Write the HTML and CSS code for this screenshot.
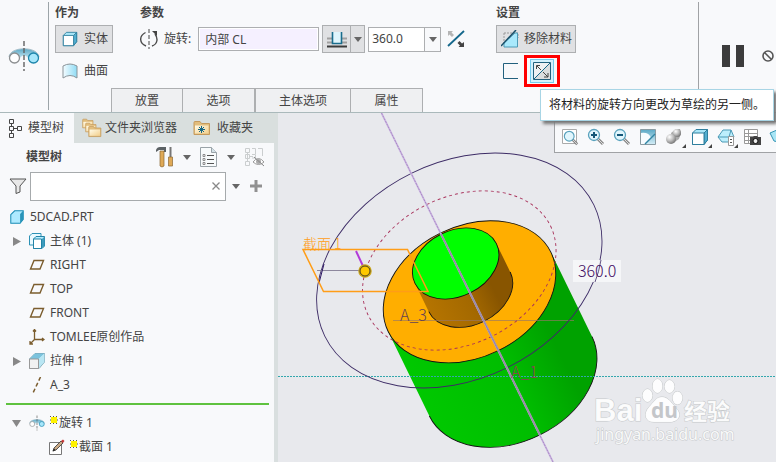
FILE: index.html
```html
<!DOCTYPE html>
<html lang="zh-CN">
<head>
<meta charset="utf-8">
<title>5DCAD.PRT</title>
<link rel="stylesheet" href="styles.css">
</head>
<body>
<svg class="defs" width="0" height="0" aria-hidden="true">
  <defs>
    <linearGradient id="ice" x1="0" y1="0" x2="1" y2="0"><stop offset="0" stop-color="#f4fcff"/><stop offset="1" stop-color="#8fdcf5"/></linearGradient>
    <linearGradient id="steel" x1="0" y1="0" x2="0" y2="1"><stop offset="0" stop-color="#5ba9c6"/><stop offset="1" stop-color="#d5eef7"/></linearGradient>
    <linearGradient id="gold" x1="0" y1="0" x2="1" y2="1"><stop offset="0" stop-color="#fffbe8"/><stop offset="1" stop-color="#f3cf8c"/></linearGradient>
    <linearGradient id="body" x1="0" y1="0" x2="1" y2="0"><stop offset="0" stop-color="#00c800"/><stop offset=".5" stop-color="#00bd00"/><stop offset=".8" stop-color="#00a200"/><stop offset="1" stop-color="#00a200"/></linearGradient>
    <linearGradient id="boss" x1="0" y1="0" x2="1" y2="0"><stop offset="0" stop-color="#b57400"/><stop offset=".45" stop-color="#a46900"/><stop offset=".75" stop-color="#885500"/><stop offset="1" stop-color="#885500"/></linearGradient>
    <radialGradient id="ball" cx=".35" cy=".3" r=".8"><stop offset="0" stop-color="#fff"/><stop offset=".5" stop-color="#bbb"/><stop offset="1" stop-color="#666"/></radialGradient>
    <symbol id="revolve" viewBox="0 0 32 32">
      <path d="M1 17C2 6 30 6 31 17L21 20C19 14 13 14 11 20Z" fill="url(#steel)"/>
      <path d="M1 17C2 6 30 6 31 17" fill="none" stroke="#a9c0ca"/>
      <circle cx="6.500" cy="18" r="5" fill="#fff" stroke="#8c8f91" stroke-width="1.300"/>
      <circle cx="25.500" cy="18" r="5" fill="#a7e7fb" stroke="#1b85ab" stroke-width="1.300"/>
      <path d="M16 1V31" stroke="#636363" stroke-width="1.400" stroke-dasharray="5 2"/>
    </symbol>
    <symbol id="folder" viewBox="0 0 18 16">
      <path d="M1 14.500V2.500Q1 1.500 2 1.500H7L8.500 3.500H16.500V14.500Z" fill="#e2bd7c" stroke="#c59a5c"/>
      <path d="M2 5.500H15.500V13.500H2Z" fill="url(#gold)"/>
    </symbol>
    <symbol id="plane" viewBox="0 0 16 12"><path d="M5 1.500H14.500L11 10H1.500Z" fill="none" stroke="#7b5d2e" stroke-width="1.400"/></symbol>
    <symbol id="spark" viewBox="0 0 8 8"><path d="M0 .5H1M3 .5H4M6 .5H7M0 7.500H1M3 7.500H4M6 7.500H7M0 4H1M7 4H8" stroke="#555"/><path d="M1 1H7V7H1Z" fill="#fff200"/></symbol>
    <symbol id="cube" viewBox="0 0 18 18">
      <path d="M1.500 5L5 1.500H16.500V12L13 16.500H1.500Z" fill="#a9e6f8" stroke="#2f7f9e"/>
      <path d="M13 5L16.500 1.500V12L13 16.500Z" fill="#52afd0" stroke="#2f7f9e"/>
      <path d="M1.500 5H13V16.500H1.500Z" fill="#fff" stroke="#2f7f9e"/>
    </symbol>
    <symbol id="lens" viewBox="0 0 18 18">
      <path d="M10 10L16 16" stroke="#888" stroke-width="3"/><path d="M11 11L16 16" stroke="#ddd"/>
      <circle cx="7" cy="7" r="5.500" fill="#e1f6fd" stroke="#5aa2bd" stroke-width="1.300"/>
    </symbol>
  </defs>
</svg>

<header class="ribbon">
  <div class="feature"><svg width="32" height="32"><use href="#revolve"/></svg></div>
  <div class="dashboard">
    <div class="groups">
      <section class="group as">
        <h2>作为</h2>
        <button class="tool pressed"><svg class="i16" viewBox="0 0 18 18"><use href="#cube"/></svg>实体</button>
        <button class="tool"><svg class="i16" viewBox="0 0 16 16"><path d="M1 3Q8-1 15 3V15Q8 10 1 15Z" fill="url(#ice)" stroke="#8b9499"/></svg>曲面</button>
      </section>
      <section class="group params">
        <h2>参数</h2>
        <div class="line">
          <svg class="turn" viewBox="0 0 18 20"><path d="M5.500 3.500C-1 7-1 14 6 17M12 17C18 15 18 9 15 5" fill="none" stroke="#4c4c4c" stroke-width="1.400"/><path d="M12 2H17V7Z" fill="#444"/><path d="M9 0V20" stroke="#444" stroke-dasharray="4 2"/></svg>
          <label for="axis">旋转:</label>
          <input id="axis" class="axis" value="内部 CL">
          <div class="split">
            <button aria-label="深度"><svg width="20" height="17" viewBox="0 0 20 17"><path d="M0 7.500H20M0 11.500H20" stroke="#a0a0a0" stroke-width="2"/><path d="M5.500 1V12.500H14.500V1" fill="#dff5fc" stroke="#196d8d" stroke-width="1.600"/><path d="M0 15.500H20" stroke="#3b3b3b" stroke-width="2"/></svg></button>
            <button class="drop" aria-label="深度选项"><svg class="caret" viewBox="0 0 8 5"><path d="M0 0H8L4 5Z"/></svg></button>
          </div>
          <div class="combo">
            <input aria-label="角度" value="360.0">
            <button class="drop" aria-label="角度列表"><svg class="caret" viewBox="0 0 8 5"><path d="M0 0H8L4 5Z"/></svg></button>
          </div>
          <button class="plain flip" aria-label="反向"><svg width="18" height="18" viewBox="0 0 18 18"><path d="M1 16L17 1" stroke="#14678b" stroke-width="1.800"/><path d="M1 1H6L4.500 2.500 7 5 5 7 2.500 4.500 1 6Z" fill="#b5b5b5"/><path d="M17 17H11.500L13 15.500 10.500 13 12.500 11 15 13.500 17 12Z" fill="#444"/></svg></button>
        </div>
      </section>
      <section class="group settings">
        <h2>设置</h2>
        <button class="tool pressed"><svg class="i18" viewBox="0 0 18 18"><path d="M3 3H17V8M3 3V13" fill="none" stroke="#999" stroke-dasharray="2 1"/><path d="M3 17V13L14 3H16.500V17Z" fill="#a9e9fc" stroke="#4d9ab6"/><path d="M0 16L15 0" stroke="#174f69" stroke-width="1.500"/></svg>移除材料</button>
        <div class="sides">
          <button class="plain open" aria-label="加厚草绘"><svg width="16" height="16" viewBox="0 0 16 16"><path d="M15 .5H.5V15.500H15" fill="none" stroke="#22617e"/></svg></button>
          <div class="callout"><button class="hot" aria-label="更改材料侧" aria-describedby="tip"><svg width="18" height="18" viewBox="0 0 18 18"><path d="M.5.500H17.500V17.500H.5Z" fill="#eef0f2" stroke="#22617e"/><path d="M1 17H17V1Z" fill="#dadddf"/><path d="M1 17L17 1" stroke="#176889"/><path d="M4 4L8 8M10 10L15 15M3.500 7V3.500H7M15 11V15H11" fill="none" stroke="#444"/></svg></button></div>
        </div>
      </section>
    </div>
    <nav class="tabs"><button class="w72">放置</button><button class="w72">选项</button><button class="w96">主体选项</button><button class="w72">属性</button></nav>
  </div>
  <div class="control">
    <button class="plain" aria-label="暂停"><svg width="24" height="22" viewBox="0 0 24 22"><path d="M1 0H9V22H1ZM15 0H23V22H15Z" fill="#3c3c3c"/></svg></button>
    <button class="plain" aria-label="无预览"><svg width="12" height="12" viewBox="0 0 12 12"><circle cx="6" cy="6" r="5" fill="none" stroke="#555" stroke-width="1.600"/><path d="M2.500 2.500L9.500 9.500" stroke="#555" stroke-width="1.600"/></svg></button>
  </div>
  <div class="tip" id="tip" role="tooltip">将材料的旋转方向更改为草绘的另一侧。</div>
</header>

<main class="work">
  <aside class="side">
    <nav class="navtabs">
      <button class="active"><svg width="14" height="19" viewBox="0 0 14 19"><path d="M1.500 .5H5.500V4.500H1.500ZM1.500 7.500H5.500V11.500H1.500ZM1.500 14.500H5.500V18.500H1.500ZM9.500 7.500H13.500V11.500H9.500ZM3.500 4.500V7.500M3.500 11.500V14.500M5.500 9.500H9.500" fill="none" stroke="#444"/></svg>模型树</button>
      <button class="files"><svg width="20" height="20" viewBox="0 0 20 20"><use href="#folder" width="12" height="11"/><use href="#folder" x="3" y="4" width="12" height="11"/><use href="#folder" x="6" y="7" width="14" height="13"/></svg>文件夹浏览器</button>
      <button class="favs"><svg width="18" height="16" viewBox="0 0 18 16"><use href="#folder" width="18" height="16"/><path d="M8.500 6V13M5 9.500H12M6 7L11 12M11 7L6 12" stroke="#146684"/></svg>收藏夹</button>
    </nav>
    <div class="treehead">
      <h2>模型树</h2>
      <button class="plain" aria-label="设置"><svg width="18" height="22" viewBox="0 0 18 22"><path d="M0 4Q1 1 4 1H10V6H8V4H3L0 6Z" fill="#5c6265"/><path d="M4 5H8V20Q6 22 4 20Z" fill="#dfa956" stroke="#8b6733" stroke-width=".7"/><path d="M14.500 1V12" stroke="#777" stroke-width="2"/><path d="M12.500 11H16.500V20H12.500Z" fill="#dfa956" stroke="#8b6733" stroke-width=".7"/></svg></button>
      <svg class="caret" viewBox="0 0 8 5"><path d="M0 0H8L4 5Z"/></svg>
      <button class="plain" aria-label="显示"><svg width="18" height="20" viewBox="0 0 18 20"><path d="M.5 .5H11.500L16.500 5.500V19.500H.5Z" fill="#f8fbfc" stroke="#9aa3a8"/><path d="M11.500 .5V5.500H16.500" fill="#d4e2e8" stroke="#9aa3a8"/><path d="M7 8.500H14M7 12.500H14M7 16.500H14" stroke="#555"/><path d="M3 7.500H5V9.500H3ZM3 11.500H5V13.500H3ZM3 15.500H5V17.500H3Z" fill="none" stroke="#777" stroke-width=".8"/></svg></button>
      <svg class="caret" viewBox="0 0 8 5"><path d="M0 0H8L4 5Z"/></svg>
      <button class="plain" aria-label="隐藏"><svg width="21" height="20" viewBox="0 0 21 20"><path d="M1.500 1.500H5.500V5.500H1.500ZM1.500 7.500H5.500V11.500H1.500ZM1.500 14.500H5.500V18.500H1.500ZM3.500 5V14M5.500 9.500H9M8 7.500H11.500V11H8M8 1.500H11.500V7M14 1.500H18.500V9" fill="none" stroke="#cbcecf"/><path d="M9 15Q14.500 8 20 15Q14.500 20 9 15Z" fill="#fff" stroke="#999"/><circle cx="14.500" cy="14.500" r="2.500" fill="#aaa"/><path d="M10 10L20 19" stroke="#888"/></svg></button>
    </div>
    <div class="search">
      <svg width="18" height="16" viewBox="0 0 18 16"><path d="M1 1H17L11 8V14L7 15.500V8Z" fill="#e8e8e8" stroke="#555"/></svg>
      <div class="field"><input aria-label="搜索模型树"><button class="plain" aria-label="清除"><svg width="8" height="8" viewBox="0 0 8 8"><path d="M.5.500L7.500 7.500M7.500.500L.5 7.500" stroke="#888" stroke-width="1.300"/></svg></button></div>
      <svg class="caret" viewBox="0 0 8 5"><path d="M0 0H8L4 5Z"/></svg>
      <button class="plain plus" aria-label="添加"><svg width="12" height="12" viewBox="0 0 12 12"><path d="M6 0V12M0 6H12" stroke="#919191" stroke-width="3"/></svg></button>
    </div>
    <ul class="tree">
      <li class="root"><svg class="i14" viewBox="0 0 18 18"><path d="M1 6L6 1H17V12L13 17H1Z" fill="#aeeaff" stroke="#188cb5" stroke-width="1.300"/><path d="M13 5L17 1V12L13 17Z" fill="#2994b9"/></svg>5DCAD.PRT</li>
      <li><span class="tw"><svg width="8" height="9" viewBox="0 0 8 9"><path d="M0 0L8 4.500L0 9Z" fill="#888"/></svg></span><svg class="i16" viewBox="0 0 16 16"><path d="M.5 3L3 .5H12V9L9.500 12H.5Z" fill="#e9f9ff" stroke="#2c91b5"/><path d="M4.500 6L7 3.500H15.500V13L13 15.500H4.500Z" fill="#b5edff" stroke="#2383a6"/><path d="M4.500 6H12.500V15.500H4.500Z" fill="#fff" stroke="#2383a6"/><path d="M13 6L15.500 3.500V13L13 15.500Z" fill="#3d9bbc"/></svg>主体 (1)</li>
      <li><span class="tw"></span><svg class="i16" viewBox="0 0 16 12"><use href="#plane"/></svg>RIGHT</li>
      <li><span class="tw"></span><svg class="i16" viewBox="0 0 16 12"><use href="#plane"/></svg>TOP</li>
      <li><span class="tw"></span><svg class="i16" viewBox="0 0 16 12"><use href="#plane"/></svg>FRONT</li>
      <li><span class="tw"></span><svg class="i16" viewBox="0 0 16 16"><path d="M5.500 1V10.500H15M5.500 10.500L1 15M4 2.500L5.500 .5L7 2.500M13 9L15 10.500L13 12M1 12V15H4" fill="none" stroke="#7b5d2e" stroke-width="1.300"/></svg>TOMLEE原创作品</li>
      <li><span class="tw"><svg width="8" height="9" viewBox="0 0 8 9"><path d="M0 0L8 4.500L0 9Z" fill="#888"/></svg></span><svg class="i16" viewBox="0 0 16 16"><path d="M.5 6L6 .5H15.500V9L10 15.500H.5Z" fill="#c3effc" stroke="#7ca1ae"/><path d="M6 .5H15.500L9.500 6H.5Z" fill="#7cc3dd"/><path d="M10 6L15.500 .5V9L10 15Z" fill="#b9e6f3"/><path d="M.5 6H9.500V15.500H.5Z" fill="#f1f1f1" stroke="#999"/></svg>拉伸 1</li>
      <li><span class="tw"></span><svg class="i16" viewBox="0 0 16 16"><path d="M11.500 0L4 16" stroke="#7b5d2e" stroke-width="1.500" stroke-dasharray="4 2.500"/></svg>A_3</li>
      <li class="insert" role="separator"></li>
      <li><span class="tw"><svg width="9" height="7" viewBox="0 0 9 7"><path d="M0 0H9L4.500 7Z" fill="#888"/></svg></span><svg class="i16" viewBox="0 0 32 32"><use href="#revolve"/></svg><svg class="spark" viewBox="0 0 8 8"><use href="#spark"/></svg>旋转 1</li>
      <li class="deep"><span class="tw"></span><svg class="i16" viewBox="0 0 16 16"><path d="M.5 3.500H12.500V15.500H.5Z" fill="#fff" stroke="#777"/><path d="M4 12L5 9L12 2L14 4L7 11Z" fill="#c9a884" stroke="#444" stroke-width=".9"/><path d="M12 2L14 .5L15.500 2L14 4Z" fill="#c63737"/><path d="M3.500 12.500L5 9.500L6.500 11Z" fill="#222"/></svg><svg class="spark" viewBox="0 0 8 8"><use href="#spark"/></svg>截面 1</li>
    </ul>
  </aside>

  <section class="viewer">
    <svg class="scene" viewBox="278 113 498 349" preserveAspectRatio="xMinYMin slice">
      <g transform="translate(469.500 291.800) rotate(-26)" stroke-width=".9">
        <path d="M-90.500 0V94A90.500 65.500 0 0 0 90.500 94V0Z" fill="url(#body)"/>
        <path d="M-90.500 94A90.500 65.500 0 0 0 90.500 94" fill="none" stroke="#111"/>
        <ellipse rx="90.500" ry="65.500" fill="#ffae00" stroke="#111"/>
        <path d="M-45.300-31.500V0A45.300 32.800 0 0 0 45.300 0V-31.500Z" fill="url(#boss)"/>
        <path d="M-45.300 0A45.300 32.800 0 0 0 45.300 0" fill="none" stroke="#111"/>
        <ellipse cy="-31.500" rx="45.300" ry="32.800" fill="#0f0" stroke="#111"/>
      </g>
      <path d="M278 376.500H776" stroke="#33a7ad" stroke-dasharray="2 1"/>
      <path d="M393 320.500H574" stroke="#977767" stroke-opacity=".65"/>
      <g transform="translate(459.300 270.500) rotate(-26)" fill="none">
        <ellipse rx="149.700" ry="108.400" stroke="#3d2c66" stroke-width=".9"/>
        <ellipse rx="101.500" ry="73.500" stroke="#a8305a" stroke-width=".9" stroke-dasharray="3 3"/>
      </g>
      <path d="M381.500 113L553 462" stroke="#cdb8e2" stroke-width="1.800"/>
      <path d="M441 234L540 435" stroke="#a096ab" stroke-width="2"/>
      <path d="M381.500 113L553 462" stroke="#906bb1" stroke-width=".6" stroke-dasharray="2 1"/>
      <text class="ztext" x="400" y="321">A_3</text>
      <text class="ztext wine" x="511" y="378">A_1</text>
      <path d="M317 270.500H359" stroke="#8d879d"/>
      <path d="M324 264L319 283" stroke="#2d1764"/>
      <path d="M303 249.500H407.500L428 291.500H323.500Z" fill="none" stroke="#ff9d17" stroke-width="1.500"/>
      <text class="section" x="303" y="249">截面 1</text>
      <path d="M356 251L363 266" stroke="#b33bd8" stroke-width="2"/>
      <circle cx="365" cy="271" r="6" fill="#ffc800" stroke="#c9a51c" stroke-width="1.500"/>
      <circle cx="365" cy="271" r="5" fill="#ffc800" stroke="#453b24"/>
      <path d="M573 260H621V282H573Z" fill="#f5f6f9" fill-opacity=".93"/>
      <path d="M601 260Q599 272 595 282" fill="none" stroke="#3d2c66" stroke-width=".8"/>
      <text class="dim" x="578" y="277">360.0</text>
      <g class="mark">
        <text class="baidu" x="594" y="421">Bai</text>
        <path d="M662 397C668 397 671 402 676 408C683 415 678 422 670 422H654C645 422 643 414 649 407C654 402 656 397 662 397Z"/>
        <ellipse cx="647.500" cy="395.500" rx="5" ry="6.500"/><ellipse cx="657.500" cy="386" rx="5" ry="7"/><ellipse cx="669.500" cy="386.500" rx="5" ry="6.500"/><ellipse cx="677.500" cy="398" rx="5" ry="6.500"/>
        <text class="jing" x="684" y="420">经验</text>
        <text class="url" x="596" y="440">jingyan.baidu.com</text>
      </g>
      <text class="du" x="651" y="418">du</text>
    </svg>
    <div class="viewbar">
      <button aria-label="重新调整"><svg viewBox="0 0 18 18"><path d="M1.500 1.500H15.500V15.500H1.500Z" fill="#fff" stroke="#aaa"/><use href="#lens" x="2" y="2" width="16" height="16"/></svg></button>
      <button aria-label="放大"><svg viewBox="0 0 18 18"><use href="#lens"/><path d="M7 4V10M4 7H10" stroke="#135778" stroke-width="2"/></svg></button>
      <button aria-label="缩小"><svg viewBox="0 0 18 18"><use href="#lens"/><path d="M4 7H10" stroke="#135778" stroke-width="2"/></svg></button>
      <button aria-label="重画"><svg viewBox="0 0 18 18"><path d="M1.500 1.500H16.500V16.500H1.500Z" fill="url(#steel)" stroke="#8a9ba2"/><path d="M2 5Q10 4 12 10L6 16H2Z" fill="#f7fcff"/><path d="M6 16L16 6" stroke="#3285a4" stroke-width="1.500"/></svg></button>
      <button class="more" aria-label="渲染"><svg viewBox="0 0 18 18"><path d="M6 5L11 1H15L16 5L14 11L8 15Z" fill="#aaa"/><circle cx="12" cy="5" r="4" fill="url(#ball)"/><circle cx="6" cy="11" r="5" fill="url(#ball)"/></svg></button>
      <button class="more" aria-label="显示样式"><svg viewBox="0 0 18 18"><use href="#cube"/></svg></button>
      <button class="more" aria-label="视图"><svg viewBox="0 0 18 18"><path d="M1 9L6 2H14L17 9L12 14H5Z" fill="#bceefc" stroke="#4b9ab6"/><path d="M1 9H17M12 9L14 2" stroke="#4b9ab6" fill="none"/><path d="M11.500 8.500H16.500V17.500H11.500Z" fill="#fff" stroke="#999"/><path d="M13 11.500H15M13 14.500H15" stroke="#555"/></svg></button>
      <button aria-label="视图管理器"><svg viewBox="0 0 18 18"><path d="M1.500 1.500H14.500V15.500H1.500ZM1.500 5.500H14.500M1.500 8.500H14.500M1.500 12.500H14.500M5.500 1.500V15.500" fill="#fff" stroke="#999"/><path d="M7 9H10L11 8H14L15 9H18V17H7Z" fill="#444"/><circle cx="12.500" cy="13" r="2.500" fill="#eee" stroke="#111"/></svg></button>
      <button aria-label="透视图"><svg viewBox="0 0 18 18"><path d="M1 5L8 2L17 6L14 15L5 13Z" fill="#a9e5f5" stroke="#3495b4"/></svg></button>
    </div>
  </section>
</main>
</body>
</html>
```
FILE: styles.css
```css
* { box-sizing: border-box; }
body {
  margin: 0;
  height: 100vh;
  display: flex;
  flex-direction: column;
  overflow: hidden;
  background: #f8f9fb;
  color: #444;
  font: 12px/16px "Noto Sans", "Noto Sans CJK SC", sans-serif;
}
.defs { position: absolute; }
svg { display: block; flex: none; }
h2 { margin: 0; font-size: 12px; line-height: 16px; font-weight: 700; }
button, input { font: inherit; color: inherit; margin: 0; }
button { display: flex; align-items: center; padding: 0; border: 0; background: none; white-space: nowrap; }
input { min-width: 0; border: 0; outline: 0; }
.i14 { width: 14px; height: 14px; }
.i16 { width: 16px; height: 16px; }
.i18 { width: 18px; height: 18px; }
.caret { width: 8px; height: 5px; fill: #666; }

.ribbon { position: relative; z-index: 2; display: flex; border-bottom: 1px solid #aab9bb; }
.feature { width: 49px; margin: 2px 0; display: flex; align-items: center; justify-content: center; border-right: 1px solid #9ca4a8; }
.dashboard { flex: 1; display: flex; flex-direction: column; }
.groups { display: flex; height: 88px; padding: 5px 0 0 6px; }
.group { display: flex; flex-direction: column; align-items: flex-start; gap: 4px; }
.as { width: 85px; }
.params { width: 356px; }
.tool { height: 28px; padding: 0 4px 0 6px; gap: 6px; border: 1px solid transparent; }
.pressed { background: #e0e1e3; border-color: #adafb1; }
.settings .tool { gap: 5px; padding: 0 3px 0 4px; }
.line { display: flex; align-items: center; height: 28px; }
.turn { width: 18px; height: 20px; margin-right: 6px; }
.axis { width: 121px; height: 24px; margin: 0 3px 0 7px; padding: 0 6px; background: #f5f0ff; border: 1px solid #adafb1; box-shadow: inset 0 0 0 1px #fff; }
.split { display: flex; height: 28px; border: 1px solid #adafb1; background: #e0e1e3; }
.split button { width: 27px; justify-content: center; }
.split .drop { width: 14px; border-left: 1px solid #adafb1; }
.combo { display: flex; width: 73px; height: 25px; margin: 0 6px 0 3px; border: 1px solid #adafb1; background: #fff; }
.combo input { flex: 1; padding: 0 3px; background: none; }
.combo .drop { width: 16px; justify-content: center; border-left: 1px solid #adafb1; background: #f8f9fb; }
.sides { display: flex; align-items: center; gap: 5px; padding-left: 7px; margin-top: -2px; }
.callout { border: 3px solid #f00; padding: 1px 3px; }
.hot { width: 24px; height: 24px; justify-content: center; background: #d4f1fd; border: 1px solid #75cbec; }
.tabs { display: flex; height: 24px; padding-left: 62px; }
.tabs button { justify-content: center; background: #eff0f2; border: 1px solid #adafb1; border-bottom: 0; }
.w72 { width: 72px; }
.w96 { width: 96px; }
.w72 + .w72, .w96 + .w72 { border-left: 0; }
.control { width: 78px; height: 108px; margin-top: 2px; padding-left: 22px; display: flex; gap: 17px; align-items: center; border-left: 1px solid #a0a2a5; }
.tip { position: absolute; right: 2px; top: 89px; padding: 7px 8px; border: 1px solid #a8d5e5; background: #fff; color: #222; box-shadow: 3px 3px 3px #777; white-space: nowrap; }

.work { flex: 1; min-height: 0; display: flex; }
.side { width: 278px; flex: none; border-right: 4px solid #d9dfdf; }
.navtabs { display: flex; height: 30px; margin-right: -4px; background: #d9dfde; }
.navtabs button { gap: 6px; padding: 0 8px; }
.navtabs .active { width: 74px; background: #f8f9fb; }
.navtabs .files { gap: 3px; }
.treehead { display: flex; align-items: center; height: 28px; padding: 0 9px 0 26px; gap: 9px; }
.treehead h2 { margin-right: auto; }
.search { display: flex; align-items: center; height: 30px; padding: 0 12px 0 9px; gap: 3px; }
.field { display: flex; align-items: center; flex: 1; height: 29px; margin-right: 3px; padding-right: 5px; border: 1px solid #a6aaac; background: #fff; }
.field input { flex: 1; width: 20px; background: none; }
.plus { margin-left: 7px; }
.tree { list-style: none; margin: 4px 0 0; padding: 0; }
.tree li { display: flex; align-items: center; height: 24px; gap: 5px; padding-left: 9px; }
.tree .root { padding-left: 10px; gap: 6px; }
.tw { width: 15px; display: flex; justify-content: center; }
.tree .deep { padding-left: 29px; }
.tree .spark { width: 8px; height: 8px; margin: 0 -4px 7px 0; }
.tree .insert { height: 2px; margin: 6px 5px 6px 6px; background: #5fc23f; }

.viewer { position: relative; flex: 1; min-width: 0; overflow: hidden; background: #e8e9ed; }
.scene { width: 100%; height: 100%; }
.viewbar { position: absolute; right: 0; top: 8px; width: 222px; height: 32px; display: flex; align-items: center; gap: 8px; padding-left: 6px; overflow: hidden; background: #f8f9fb; border: 1px solid #a0a2a5; border-right: 0; }
.viewbar button { flex: none; position: relative; }
.viewbar svg { width: 18px; height: 18px; }
.more::after { content: ""; position: absolute; right: -3px; bottom: -2px; border: 2px solid; border-color: transparent #444 #444 transparent; }
.ztext { font: 300 16px "Noto Sans CJK SC", sans-serif; fill: #654253; }
.wine { fill: #8f3d55; }
.section { font: 300 14px "Noto Sans CJK SC", sans-serif; fill: #ff9d17; }
.dim { font: 300 16px "Noto Sans CJK SC", sans-serif; fill: #400b62; }
.mark { fill: #fff; fill-opacity: .9; stroke: #c5c8ca; stroke-width: 1; paint-order: stroke; }
.baidu { font: 700 31px "Liberation Sans", sans-serif; }
.jing { font: 700 23px "Noto Sans CJK SC", sans-serif; }
.url { font-size: 16px; }
.du { font: 700 21px "Noto Sans", sans-serif; fill: #c4c6ca; }
```
